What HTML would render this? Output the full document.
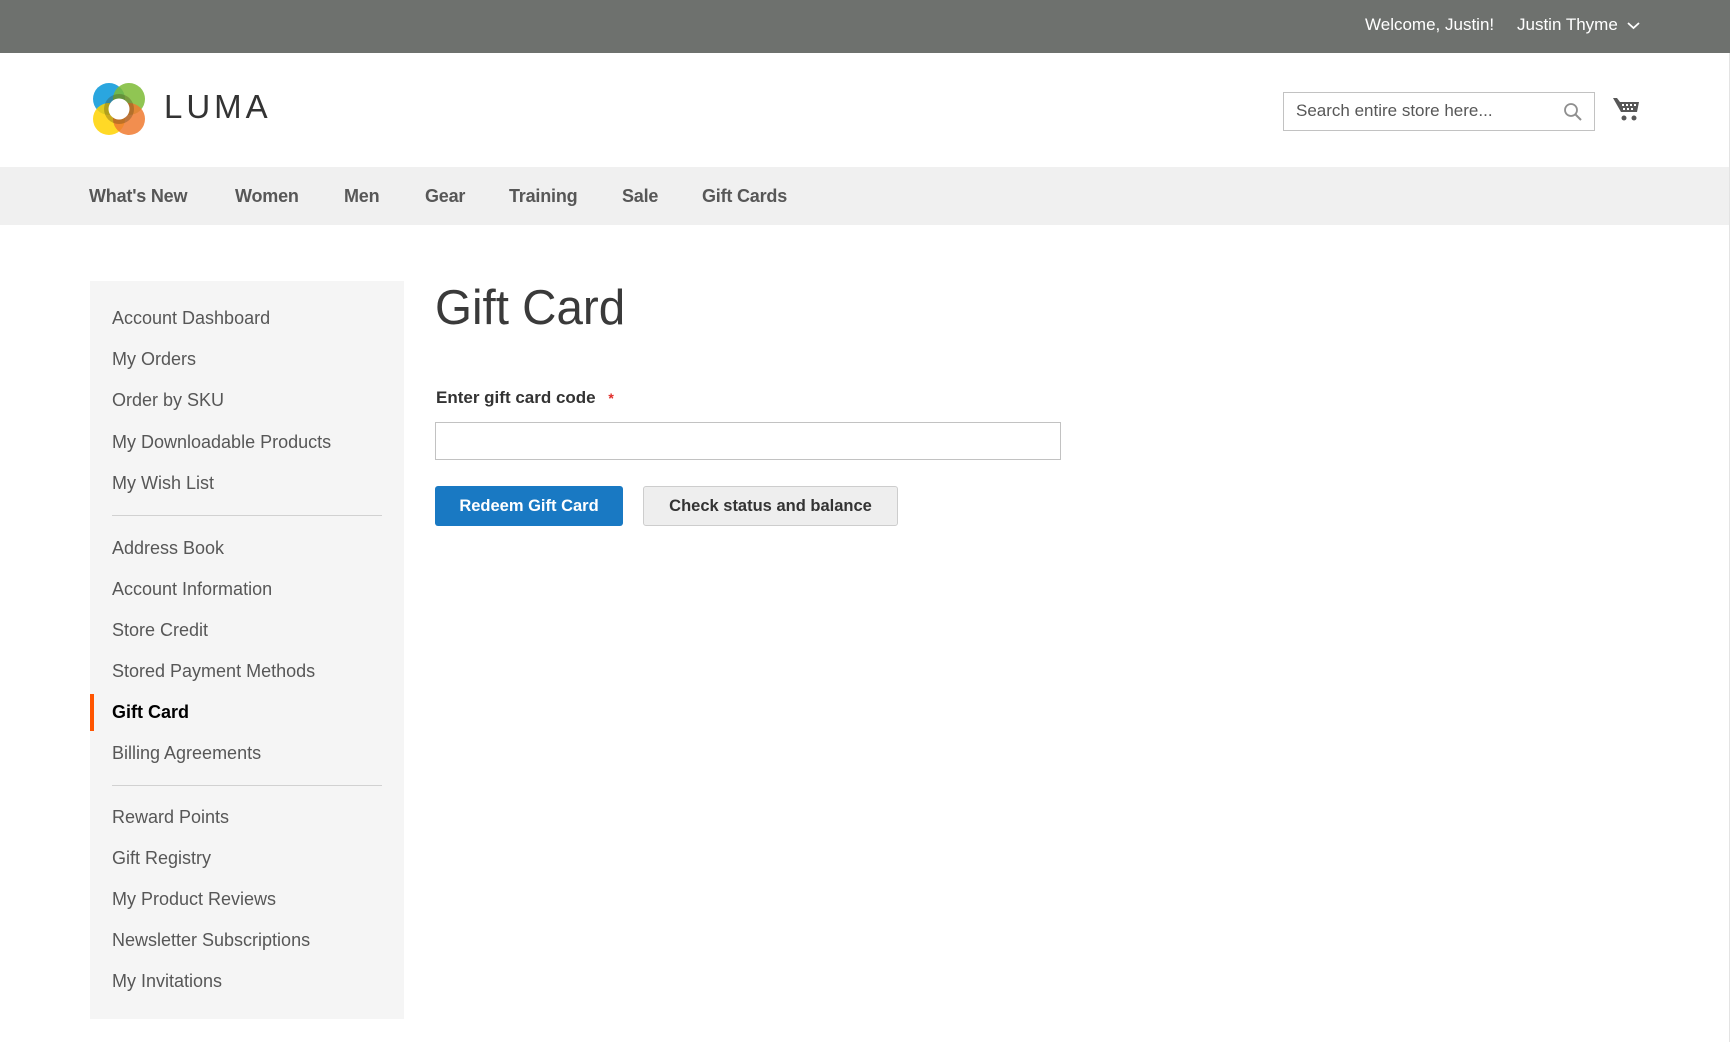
<!DOCTYPE html>
<html><head><meta charset="utf-8"><style>
*{margin:0;padding:0;box-sizing:border-box}
body{width:1730px;height:1042px;background:#fff;font-family:"Liberation Sans",sans-serif;color:#333;position:relative;overflow:hidden}
.abs{position:absolute}
.top{left:0;top:0;width:1730px;height:53px;background:#6e716e;color:#fff;font-size:17px}
.nav{left:0;top:167px;width:1729px;height:58px;background:#f0f0f0}
.nav span{position:absolute;top:0;line-height:58px;font-size:18px;font-weight:bold;color:#575757;letter-spacing:-0.2px}
.side{left:90px;top:281px;width:314px;height:738px;background:#f5f5f5}
.side div{position:absolute;left:22px;font-size:18px;color:#575757;line-height:24px;white-space:nowrap}
.hr{position:absolute;left:22px;width:270px;height:1px;background:#d1d1d1}
</style></head><body>
<div class="abs top">
 <span class="abs" style="left:1365px;top:15px">Welcome, Justin!</span>
 <span class="abs" style="left:1517px;top:15px">Justin Thyme</span>
 <svg class="abs" style="left:1627px;top:21px" width="13" height="9" viewBox="0 0 13 9"><path d="M1 2 L6.5 7 L12 2" stroke="#fff" stroke-width="1.8" fill="none"/></svg>
</div>
<div class="abs" style="left:1729px;top:53px;width:1px;height:989px;background:#e3e3e3"></div>
<svg class="abs" style="left:89px;top:79px" width="60" height="60" viewBox="0 0 60 60">
 <circle cx="20" cy="20" r="16" fill="#1fa1dd" opacity=".95"/>
 <circle cx="40" cy="20" r="16" fill="#7dbb35" opacity=".85"/>
 <circle cx="20" cy="40" r="16" fill="#ffd200" opacity=".85"/>
 <circle cx="40" cy="40" r="16" fill="#f07a30" opacity=".85"/>
 <circle cx="30" cy="30" r="15" fill="#4a3a10" opacity=".3"/>
 <circle cx="30" cy="30" r="10.5" fill="#fff"/>
</svg>
<div class="abs" style="left:164px;top:88px;font-size:33px;letter-spacing:4px;color:#333">LUMA</div>
<div class="abs" style="left:1283px;top:92px;width:312px;height:39px;border:1px solid #c2c2c2;background:#fff">
 <span class="abs" style="left:12px;top:8px;font-size:17px;color:#575757">Search entire store here...</span>
 <svg class="abs" style="left:279px;top:9px" width="20" height="20" viewBox="0 0 20 20"><circle cx="8" cy="8" r="6" stroke="#8f8f8f" stroke-width="1.8" fill="none"/><path d="M12.5 12.5 L18 18" stroke="#8f8f8f" stroke-width="2"/></svg>
</div>
<svg class="abs" style="left:1612px;top:96px" width="29" height="26" viewBox="0 0 29 26">
 <path d="M1 2 L5 2 L8 6 L27 6 L25 16 L9 16 Z" fill="#575757"/>
 <path d="M10 8h2v2h-2zM14 8h2v2h-2zM18 8h2v2h-2zM22 8h2v2h-2zM11 12h2v2h-2zM15 12h2v2h-2zM19 12h2v2h-2z" fill="#fff"/>
 <circle cx="12" cy="22" r="2.5" fill="#575757"/><circle cx="22" cy="22" r="2.5" fill="#575757"/>
</svg>
<div class="abs nav">
 <span style="left:89px">What's New</span><span style="left:235px">Women</span><span style="left:344px">Men</span><span style="left:425px">Gear</span><span style="left:509px">Training</span><span style="left:622px">Sale</span><span style="left:702px">Gift Cards</span>
</div>
<div class="abs side">
 <div style="top:25px">Account Dashboard</div>
 <div style="top:66px">My Orders</div>
 <div style="top:107px">Order by SKU</div>
 <div style="top:149px">My Downloadable Products</div>
 <div style="top:190px">My Wish List</div>
 <span class="hr" style="top:234px"></span>
 <div style="top:255px">Address Book</div>
 <div style="top:296px">Account Information</div>
 <div style="top:337px">Store Credit</div>
 <div style="top:378px">Stored Payment Methods</div>
 <span style="position:absolute;left:0;top:413px;width:4px;height:37px;background:#ff5501"></span>
 <div style="top:419px;color:#000;font-weight:bold">Gift Card</div>
 <div style="top:460px">Billing Agreements</div>
 <span class="hr" style="top:504px"></span>
 <div style="top:524px">Reward Points</div>
 <div style="top:565px">Gift Registry</div>
 <div style="top:606px">My Product Reviews</div>
 <div style="top:647px">Newsletter Subscriptions</div>
 <div style="top:688px">My Invitations</div>
</div>
<div class="abs" style="left:435px;top:278px;font-size:49px;color:#3a3a3a;line-height:60px;transform:scaleX(0.97);transform-origin:left">Gift Card</div>
<div class="abs" style="left:436px;top:388px;font-size:17px;font-weight:bold;color:#333">Enter gift card code <span style="color:#e02b27;margin-left:8px;font-size:14px">*</span></div>
<div class="abs" style="left:435px;top:422px;width:626px;height:38px;border:1px solid #c2c2c2;background:#fff"></div>
<div class="abs" style="left:435px;top:486px;width:188px;height:40px;background:#1979c3;border-radius:3px;color:#fff;font-size:16.5px;font-weight:bold;text-align:center;line-height:40px">Redeem Gift Card</div>
<div class="abs" style="left:643px;top:486px;width:255px;height:40px;background:#eee;border:1px solid #cdcdcd;border-radius:3px;color:#333;font-size:16.5px;font-weight:bold;text-align:center;line-height:38px">Check status and balance</div>
</body></html>
